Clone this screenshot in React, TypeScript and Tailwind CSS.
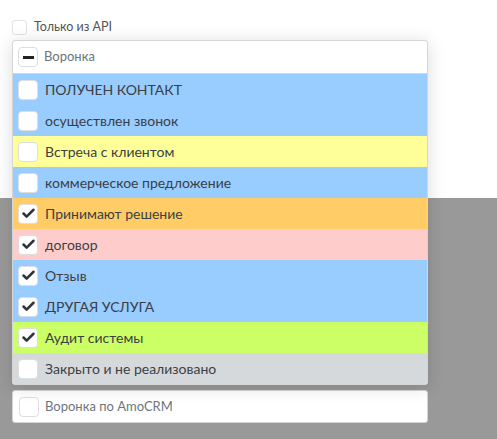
import { Check } from "lucide-react";

interface Stage {
  name: string;
  bg: string;
  checked: boolean;
}

const stages: Stage[] = [
  { name: "ПОЛУЧЕН КОНТАКТ", bg: "bg-[#99ccff]", checked: false },
  { name: "осуществлен звонок", bg: "bg-[#99ccff]", checked: false },
  { name: "Встреча с клиентом", bg: "bg-[#ffff99]", checked: false },
  { name: "коммерческое предложение", bg: "bg-[#99ccff]", checked: false },
  { name: "Принимают решение", bg: "bg-[#ffcc66]", checked: true },
  { name: "договор", bg: "bg-[#ffcccc]", checked: true },
  { name: "Отзыв", bg: "bg-[#99ccff]", checked: true },
  { name: "ДРУГАЯ УСЛУГА", bg: "bg-[#99ccff]", checked: true },
  { name: "Аудит системы", bg: "bg-[#ccff66]", checked: true },
  { name: "Закрыто и не реализовано", bg: "bg-[#d6d9dc]", checked: false },
];

function Box({ checked }: { checked?: boolean }) {
  return (
    <span className="flex h-5 w-5 shrink-0 items-center justify-center rounded-[4px] border border-[#dedede] bg-white">
      {checked && <Check size={15} strokeWidth={4} className="text-[#2f343a]" />}
    </span>
  );
}

export default function App() {
  return (
    <div className="relative h-[439px] w-full font-['Lato',sans-serif]">
      <div className="h-[198px] bg-white px-3 pt-[18px]">
        <label className="flex items-center gap-[7px] text-[12.5px] text-[#555]">
          <span className="h-[15px] w-[15px] rounded-[3px] border border-[#e2e2e2] bg-white" />
          Только из API
        </label>
      </div>
      <div className="h-[241px] bg-[#999] px-3 pt-[192px]">
        <div className="flex h-[33px] w-[416px] items-center gap-[6px] rounded-[3px] border border-[#d4d4d4] bg-white px-[6px] text-[13px] text-[#6c757d]">
          <Box />
          Воронка по AmoCRM
        </div>
      </div>

      <div className="absolute left-3 top-10 w-[416px] overflow-hidden rounded-[3px] border border-[#d6d6d6] bg-white shadow-[0_2px_18px_rgba(0,0,0,0.14)]">
        <div className="flex h-[33px] items-center gap-[6px] border-b border-[#d6d6d6] px-[5px] text-[13px] text-[#6c757d]">
          <span className="flex h-5 w-5 items-center justify-center rounded-[4px] border border-[#dedede] bg-white">
            <span className="h-[3px] w-[11px] bg-[#222]" />
          </span>
          Воронка
        </div>
        {stages.map((s) => (
          <div
            key={s.name}
            className={`flex h-[31px] items-center gap-[7px] px-[5px] text-[14px] text-[#3a3f44] ${s.bg}`}
          >
            <Box checked={s.checked} />
            {s.name}
          </div>
        ))}
      </div>
    </div>
  );
}
